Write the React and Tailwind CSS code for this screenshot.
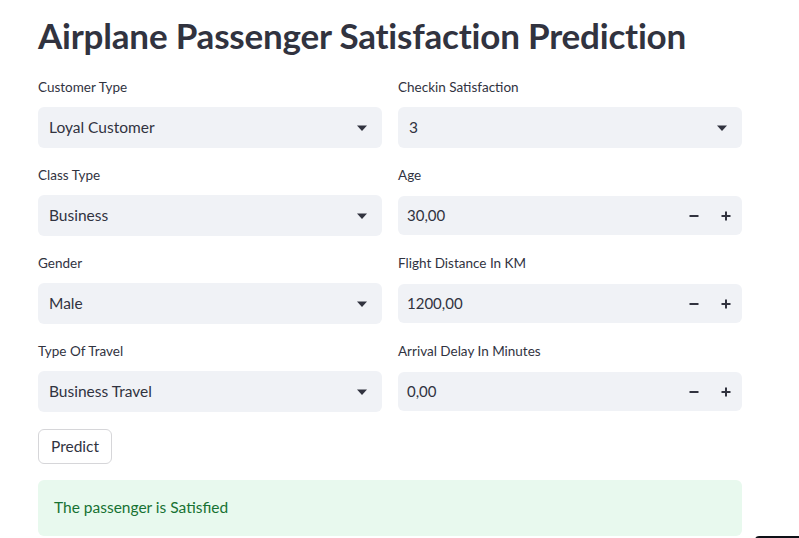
import React from 'react';

const font = { fontFamily: 'Lato, "Noto Sans", sans-serif' };

function Caret() {
  return (
    <svg width="12" height="8" viewBox="0 0 12 8" className="shrink-0">
      <path d="M1 1.5h10L6 7z" fill="#31333f" />
    </svg>
  );
}

function SelectField({ label, value }) {
  return (
    <div className="flex flex-col">
      <label className="text-[13.5px] text-[#31333f] h-[20px] leading-[20px] mb-[10px]">{label}</label>
      <div className="h-[41px] bg-[#f0f2f6] rounded-[6px] flex items-center justify-between pl-[11px] pr-[14px]">
        <span className="text-[15.5px] text-[#31333f]">{value}</span>
        <Caret />
      </div>
    </div>
  );
}

function NumberField({ label, value }) {
  return (
    <div className="flex flex-col">
      <label className="text-[13.5px] text-[#31333f] h-[20px] leading-[20px] mb-[10px]">{label}</label>
      <div className="h-[39px] mt-[1px] mb-[1px] bg-[#f0f2f6] rounded-[6px] flex items-center justify-between pl-[9px]">
        <span className="text-[15px] text-[#31333f]">{value}</span>
        <div className="flex h-full">
          <button className="w-[32px] h-full flex items-center justify-center">
            <svg width="10" height="10" viewBox="0 0 10 10"><path d="M0.5 5h9" stroke="#31333f" strokeWidth="2" /></svg>
          </button>
          <button className="w-[32px] h-full flex items-center justify-center">
            <svg width="10" height="10" viewBox="0 0 10 10"><path d="M0.5 5h9M5 0.5v9" stroke="#31333f" strokeWidth="2" /></svg>
          </button>
        </div>
      </div>
    </div>
  );
}

export default function App() {
  return (
    <div className="relative w-[799px] h-[538px] overflow-hidden bg-white text-[#31333f]" style={font}>
      <div className="w-[704px] ml-[38px] pt-[13px]">
        <h1 className="text-[35px] font-bold leading-[44px] tracking-[-0.2px] text-[#31333f] mb-[20px]">
          Airplane Passenger Satisfaction Prediction
        </h1>
        <div className="grid grid-cols-2 gap-x-[16px] gap-y-[17px]">
          <SelectField label="Customer Type" value="Loyal Customer" />
          <SelectField label="Checkin Satisfaction" value="3" />
          <SelectField label="Class Type" value="Business" />
          <NumberField label="Age" value="30,00" />
          <SelectField label="Gender" value="Male" />
          <NumberField label="Flight Distance In KM" value="1200,00" />
          <SelectField label="Type Of Travel" value="Business Travel" />
          <NumberField label="Arrival Delay In Minutes" value="0,00" />
        </div>
        <button className="mt-[17px] h-[35px] px-[12px] border border-[#d6d6d9] rounded-[6px] bg-white text-[15.5px] text-[#31333f]">
          Predict
        </button>
        <div className="mt-[16px] h-[56px] rounded-[6px] bg-[#e8f9ee] flex items-center px-[16px] text-[15.5px] text-[#177233]">
          The passenger is Satisfied
        </div>
      </div>
      <div className="absolute left-[755px] top-[536px] w-[60px] h-[10px] rounded-tl-[4px] bg-[#0e1117]" />
    </div>
  );
}
